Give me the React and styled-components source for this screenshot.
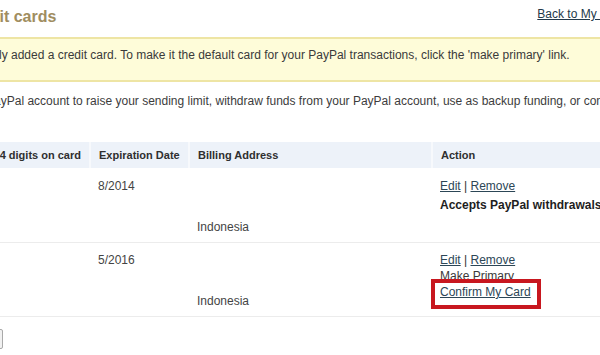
import React from 'react';
import styled, { createGlobalStyle } from 'styled-components';

const GlobalStyle = createGlobalStyle`
  html, body {
    margin: 0;
    padding: 0;
    background: #ffffff;
    overflow: hidden;
  }

  body {
    font-family: "Liberation Sans", Arial, sans-serif;
    font-size: 12px;
    color: #333333;
  }
`;

const Page = styled.div`
  width: 800px;
  margin-left: -140px;
`;

const TopBar = styled.div`
  display: flex;
  justify-content: space-between;
  align-items: flex-start;
  height: 37px;
  padding: 0 26px 0 103px;
`;

const Title = styled.h1`
  margin: 0;
  padding-top: 8px;
  font-size: 16px;
  line-height: 18px;
  font-weight: bold;
  color: #a08d60;
`;

const BackLink = styled.a`
  margin-top: 6px;
  font-size: 12px;
  line-height: 16px;
  color: #23394a;
  text-decoration: underline;
`;

const Notice = styled.div`
  border: 2px solid #eee5a4;
  background: #fefcd9;
  padding: 8px 0 17px 28px;
  line-height: 16px;
  color: #3a3a3a;
  white-space: nowrap;
`;

const Intro = styled.p`
  margin: 11px 0 0;
  padding-left: 24px;
  line-height: 16px;
  color: #3c3c3c;
  white-space: nowrap;
`;

const CardTable = styled.table`
  margin: 33px 0 0 106px;
  width: 700px;
  border-collapse: collapse;
  table-layout: fixed;
`;

const HeadCell = styled.th`
  box-sizing: border-box;
  width: ${(p) => p.$w || 'auto'};
  height: 26px;
  padding: 0 8px;
  background: #edf2f9;
  border-left: 2px solid #f7f9fc;
  font-size: 11px;
  font-weight: bold;
  text-align: left;
  color: #2f2f2f;
  &:first-child {
    border-left: none;
  }
`;

const Row = styled.tr`
  border-bottom: 1px solid #ececec;
`;

const Cell = styled.td`
  box-sizing: border-box;
  vertical-align: top;
  padding: ${(p) => p.$top}px 8px 7px;
  line-height: 16px;
  color: #444444;
`;

const Country = styled.div`
  margin-top: ${(p) => p.$offset}px;
`;

const ActionLinks = styled.div`
  color: #333333;
`;

const TextLink = styled.a`
  color: #2c4656;
  text-decoration: underline;
`;

const Note = styled.div`
  margin-top: 3px;
  font-weight: bold;
  color: #1e1e1e;
  white-space: nowrap;
`;

const Plain = styled.div`
  color: #3a3a3a;
`;

const Highlighted = styled.div`
  position: relative;
  display: inline-block;
`;

const RedFrame = styled.span`
  position: absolute;
  left: -9px;
  right: -10px;
  top: -5px;
  bottom: -9px;
  border: 4px solid #c8171f;
  pointer-events: none;
`;

const Footer = styled.div`
  margin-top: 12px;
  padding-left: 83px;
`;

const GreyButton = styled.button`
  width: 60px;
  height: 20px;
  border: 1px solid #a9a9a9;
  border-radius: 2px;
  background: #f1f1f1;
  font-family: "Liberation Sans", Arial, sans-serif;
  font-size: 11px;
  color: #333333;
`;

const cards = [
  { expires: '8/2014', primary: true, top: 10, offset: 41 },
  { expires: '5/2016', primary: false, top: 9, offset: 41 },
];

const App = () => {
  return (
    <>
      <GlobalStyle />
      <Page>
        <TopBar>
          <Title>Credit cards</Title>
          <BackLink href="#">Back to My Profile</BackLink>
        </TopBar>

        <Notice>
          You have successfully added a credit card. To make it the default card for your PayPal transactions, click the 'make primary' link.
        </Notice>

        <Intro>
          Link a card to your PayPal account to raise your sending limit, withdraw funds from your PayPal account, use as backup funding, or confirm your identity.
        </Intro>

        <CardTable>
          <thead>
            <tr>
              <HeadCell $w="124px">Last 4 digits on card</HeadCell>
              <HeadCell $w="99px">Expiration Date</HeadCell>
              <HeadCell $w="243px">Billing Address</HeadCell>
              <HeadCell>Action</HeadCell>
            </tr>
          </thead>
          <tbody>
            {cards.map((card) => (
              <Row key={card.expires}>
                <Cell $top={card.top}></Cell>
                <Cell $top={card.top}>{card.expires}</Cell>
                <Cell $top={card.top}>
                  <Country $offset={card.offset}>Indonesia</Country>
                </Cell>
                <Cell $top={card.top}>
                  <ActionLinks>
                    <TextLink href="#">Edit</TextLink> | <TextLink href="#">Remove</TextLink>
                  </ActionLinks>
                  {card.primary ? (
                    <Note>Accepts PayPal withdrawals</Note>
                  ) : (
                    <>
                      <Plain>Make Primary</Plain>
                      <Highlighted>
                        <TextLink href="#">Confirm My Card</TextLink>
                        <RedFrame />
                      </Highlighted>
                    </>
                  )}
                </Cell>
              </Row>
            ))}
          </tbody>
        </CardTable>

        <Footer>
          <GreyButton type="button">Add Card</GreyButton>
        </Footer>
      </Page>
    </>
  );
};

export default App;
